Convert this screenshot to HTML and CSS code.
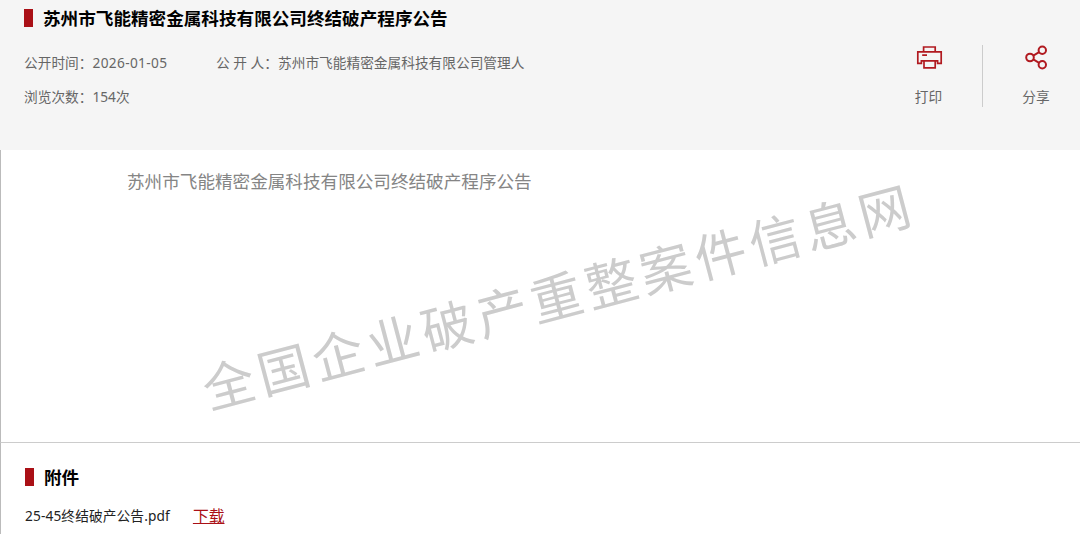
FILE: index.html
```html
<!DOCTYPE html>
<html lang="zh-CN">
<head>
  <meta charset="UTF-8">
  <title>苏州市飞能精密金属科技有限公司终结破产程序公告</title>
  <meta name="viewport" content="width=device-width, initial-scale=1">
  <link rel="stylesheet" href="styles.css">
</head>
<body>
  <div class="header">
    <div class="header-info">
      <h1 class="title">苏州市飞能精密金属科技有限公司终结破产程序公告</h1>
      <div class="meta">
        <div class="meta-item meta-date">公开时间：<span class="date">2026-01-05</span></div>
        <div class="meta-item"><span class="publisher">公 开 人：</span>苏州市飞能精密金属科技有限公司管理人</div>
      </div>
      <div class="meta">
        <div class="meta-item">浏览次数：154次</div>
      </div>
    </div>
    <div class="actions">
      <a class="action">
        <svg width="28" height="26" viewBox="0 0 28 26" fill="none" stroke="#b11a20" stroke-width="1.7">
          <path d="M8.6 6.6V2H20.2V6.6M6.4 18.3H2.8V6.9H26.2V18.3H22.6V15.8H6.4ZM9 15.8V22.8H20.2V15.8M7.2 10.2H12"/>
        </svg>
        <span>打印</span>
      </a>
      <a class="action action-share">
        <svg width="28" height="26" viewBox="0 0 28 26" fill="none" stroke="#b11a20" stroke-width="2">
          <circle cx="8" cy="12.5" r="3.8"/>
          <circle cx="20.3" cy="5.3" r="3.7"/>
          <circle cx="20.3" cy="19.7" r="3.7"/>
          <path d="M11.3 10.6L17.1 7.2M11.3 14.4L17.1 17.8"/>
        </svg>
        <span>分享</span>
      </a>
    </div>
  </div>

  <div class="content">
    <p class="content-text">苏州市飞能精密金属科技有限公司终结破产程序公告</p>
    <div class="watermark">全国企业破产重整案件信息网</div>
  </div>

  <div class="attachment">
    <h2 class="title">附件</h2>
    <div class="file">
      <span class="file-name">25-45终结破产公告.pdf</span>
      <a class="download">下载</a>
    </div>
  </div>
</body>
</html>
```

FILE: styles.css
```css
* { margin: 0; padding: 0; box-sizing: border-box; }
body {
  font-family: 'Noto Sans', 'Noto Sans CJK SC', sans-serif;
  font-size: 13.7px;
  color: #666;
  background: #fff;
  height: 534px;
  overflow: hidden;
}
.header {
  display: flex;
  justify-content: space-between;
  height: 150px;
  padding: 6px 0 0 24px;
  background: #f5f5f5;
}
.title {
  display: flex;
  align-items: center;
  gap: 10px;
  height: 24px;
  font-size: 17.6px;
  font-weight: 700;
  line-height: 24px;
  color: #000;
  white-space: nowrap;
}
.title::before {
  content: "";
  width: 9px;
  height: 18px;
  background: #aa1016;
}
.meta {
  display: flex;
  height: 34px;
  line-height: 34px;
  white-space: nowrap;
}
.title + .meta {
  margin-top: 16px;
}
.meta-date {
  width: 192px;
}
.date {
  letter-spacing: 0.35px;
}
.publisher {
  display: inline-block;
  width: 62px;
}
.actions {
  display: flex;
  height: 62px;
  margin-top: 39px;
}
.action {
  display: flex;
  flex-direction: column;
  align-items: center;
  width: 108px;
  border-right: 1px solid #ccc;
}
.action-share {
  width: 97px;
  padding-left: 9px;
  border-right: none;
}
.action span {
  margin-top: 16px;
  line-height: 20px;
}
.content {
  position: relative;
  height: 292px;
  padding: 18px 0 0 126px;
  border-left: 1px solid #bbb;
}
.content-text {
  font-size: 17.6px;
  line-height: 26px;
  color: #858585;
}
/* 斜向水印 */
.watermark {
  position: absolute;
  top: 147px;
  left: 558px;
  font-size: 51.5px;
  letter-spacing: 5px;
  line-height: 1;
  color: #ccc;
  white-space: nowrap;
  transform: translate(-50%, -50%) rotate(-14.8deg);
}
.attachment {
  height: 92px;
  padding: 22px 0 0 24px;
  border-top: 1px solid #ccc;
  border-left: 1px solid #bbb;
}
.file {
  display: flex;
  align-items: center;
  height: 28px;
  margin-top: 12px;
  color: #222;
}
.file-name {
  letter-spacing: 0.12px;
}
.download {
  margin-left: 23px;
  font-size: 15.8px;
  color: #aa1016;
  text-decoration: underline;
}
```
